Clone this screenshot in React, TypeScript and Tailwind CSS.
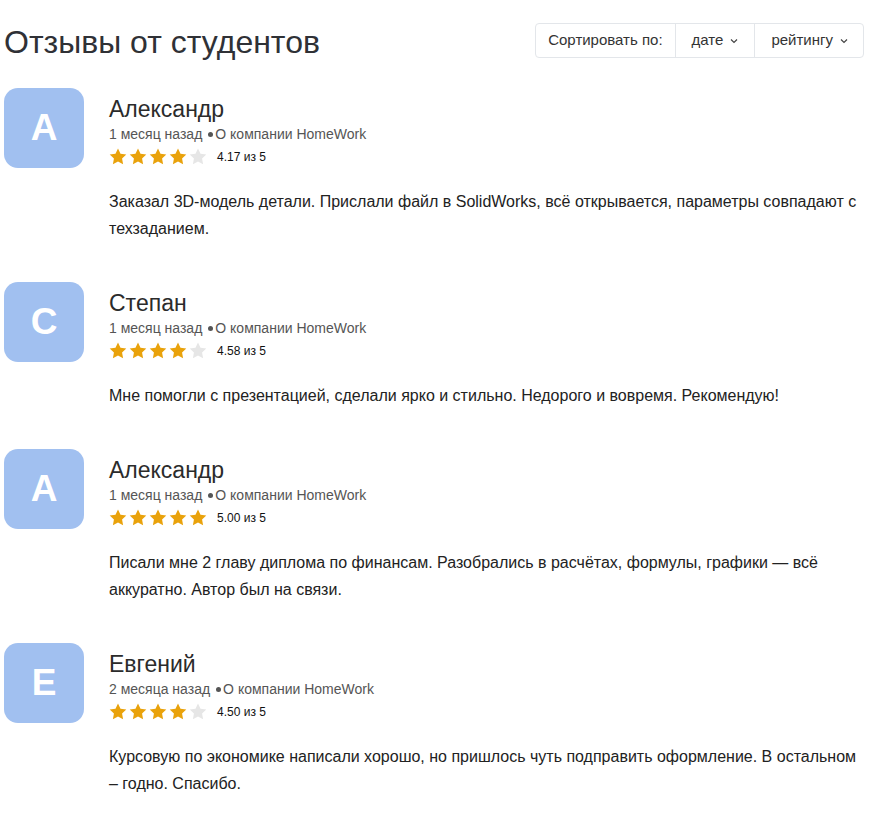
import React from "react";

type Review = {
  letter: string;
  name: string;
  when: string;
  rating: string;
  full: number;
  text: string;
};

const reviews: Review[] = [
  {
    letter: "А",
    name: "Александр",
    when: "1 месяц назад",
    rating: "4.17",
    full: 4,
    text: "Заказал 3D-модель детали. Прислали файл в SolidWorks, всё открывается, параметры совпадают с техзаданием.",
  },
  {
    letter: "С",
    name: "Степан",
    when: "1 месяц назад",
    rating: "4.58",
    full: 4,
    text: "Мне помогли с презентацией, сделали ярко и стильно. Недорого и вовремя. Рекомендую!",
  },
  {
    letter: "А",
    name: "Александр",
    when: "1 месяц назад",
    rating: "5.00",
    full: 5,
    text: "Писали мне 2 главу диплома по финансам. Разобрались в расчётах, формулы, графики — всё аккуратно. Автор был на связи.",
  },
  {
    letter: "Е",
    name: "Евгений",
    when: "2 месяца назад",
    rating: "4.50",
    full: 4,
    text: "Курсовую по экономике написали хорошо, но пришлось чуть подправить оформление. В остальном – годно. Спасибо.",
  },
];

function Star({ on }: { on: boolean }) {
  return (
    <svg width="18" height="17" viewBox="0 0 24 23" className="shrink-0">
      <path
        d="M12 0.8l3.4 7.1 7.8 1-5.7 5.4 1.4 7.7L12 18.3 5.1 22l1.4-7.7L0.8 8.9l7.8-1z"
        fill={on ? "#e9a20b" : "#e6e6e6"}
      />
    </svg>
  );
}

function Chevron() {
  return (
    <svg width="8" height="6" viewBox="0 0 8 6" className="ml-[7px] mt-[1px]">
      <path d="M1 1.5l3 3 3-3" stroke="#444" strokeWidth="1.2" fill="none" />
    </svg>
  );
}

export default function App() {
  return (
    <div
      className="w-[872px] min-h-[826px] bg-white text-[#333] pl-[4px] pr-[8px]"
      style={{ fontFamily: '"Liberation Sans", Arial, sans-serif' }}
    >
      <div className="flex items-start justify-between pt-[23px]">
        <h1 className="text-[32px] leading-[35px] text-[#2f3136] mt-[2px]">Отзывы от студентов</h1>
        <div className="flex h-[35px] border border-[#e3e6ea] rounded-[4px] text-[15px] text-[#333]">
          <div className="flex items-center px-[12px] border-r border-[#e3e6ea]">Сортировать по:</div>
          <div className="flex items-center pl-[16px] pr-[16px] border-r border-[#e3e6ea]">
            дате
            <Chevron />
          </div>
          <div className="flex items-center pl-[16px] pr-[15px]">
            рейтингу
            <Chevron />
          </div>
        </div>
      </div>

      <div className="mt-[28px] flex flex-col gap-[40px]">
        {reviews.map((r, i) => (
          <div key={i}>
            <div className="flex">
              <div className="w-[80px] h-[80px] rounded-[14px] bg-[#a1c0f0] flex items-center justify-center text-white font-bold text-[37px] shrink-0">
                {r.letter}
              </div>
              <div className="ml-[25px] pt-[8px]">
                <div className="text-[23px] leading-[26px] text-[#2b2b2b]">{r.name}</div>
                <div className="text-[14px] leading-[18px] text-[#555] mt-[3px] flex items-center">
                  <span>{r.when}</span>
                  <span className="ml-[6px] mr-[2px] w-[5px] h-[5px] rounded-full bg-[#555] inline-block" />
                  <span>О компании HomeWork</span>
                </div>
                <div className="flex items-center mt-[5px]">
                  <div className="flex gap-[2px]">
                    {[0, 1, 2, 3, 4].map((k) => (
                      <Star key={k} on={k < r.full} />
                    ))}
                  </div>
                  <span className="ml-[10px] text-[12px] leading-[16px] text-[#111]">{r.rating} из 5</span>
                </div>
              </div>
            </div>
            <p className="mt-[20px] ml-[105px] text-[16px] leading-[27px] text-[#222]">{r.text}</p>
          </div>
        ))}
      </div>
    </div>
  );
}
